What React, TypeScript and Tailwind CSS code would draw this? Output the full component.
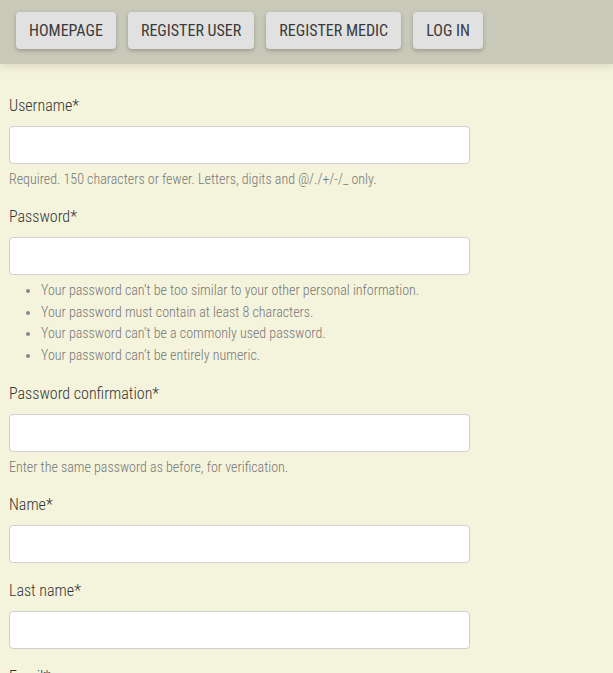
const navItems = ["HOMEPAGE", "REGISTER USER", "REGISTER MEDIC", "LOG IN"];

const passwordRules = [
  "Your password can’t be too similar to your other personal information.",
  "Your password must contain at least 8 characters.",
  "Your password can’t be a commonly used password.",
  "Your password can’t be entirely numeric.",
];

function Field({
  label,
  type = "text",
  help,
  children,
}: {
  label: string;
  type?: string;
  help?: string;
  children?: React.ReactNode;
}) {
  return (
    <div className="mb-4">
      <label className="block mb-2 text-[16px] leading-6 text-[#333]">{label}</label>
      <input
        type={type}
        className="block w-[461px] h-[38px] rounded-[4px] border border-[#cfcfcf] bg-white px-3 outline-none"
      />
      {help && <p className="mt-[5px] text-[14px] leading-5 text-[#777]">{help}</p>}
      {children}
    </div>
  );
}

export default function App() {
  return (
    <div
      className="min-h-[673px] bg-[#f4f3dc] font-light [font-stretch:condensed]"
      style={{ fontFamily: "Roboto, 'Liberation Sans', sans-serif" }}
    >
      <nav className="relative flex h-16 items-start gap-3 bg-[#c9c9b9] px-4 pt-3 shadow-[0_3px_7px_rgba(170,170,130,0.3)]">
        {navItems.map((item) => (
          <button
            key={item}
            className="h-[37px] rounded-[4px] bg-[#e1e1e1] px-[13px] text-[16px] font-normal text-[#3a3a3a] shadow-[0_2px_4px_rgba(0,0,0,0.22)]"
          >
            {item}
          </button>
        ))}
      </nav>

      <form className="px-[9px] pt-[30px]">
        <Field
          label="Username*"
          help="Required. 150 characters or fewer. Letters, digits and @/./+/-/_ only."
        />
        <Field label="Password*" type="password">
          <ul className="mt-[5px] list-disc pl-8 text-[14px] leading-[21.5px] text-[#777] marker:text-[#888]">
            {passwordRules.map((rule) => (
              <li key={rule}>{rule}</li>
            ))}
          </ul>
        </Field>
        <Field
          label="Password confirmation*"
          type="password"
          help="Enter the same password as before, for verification."
        />
        <Field label="Name*" />
        <Field label="Last name*" />
        <Field label="Email*" type="email" />
      </form>
    </div>
  );
}
